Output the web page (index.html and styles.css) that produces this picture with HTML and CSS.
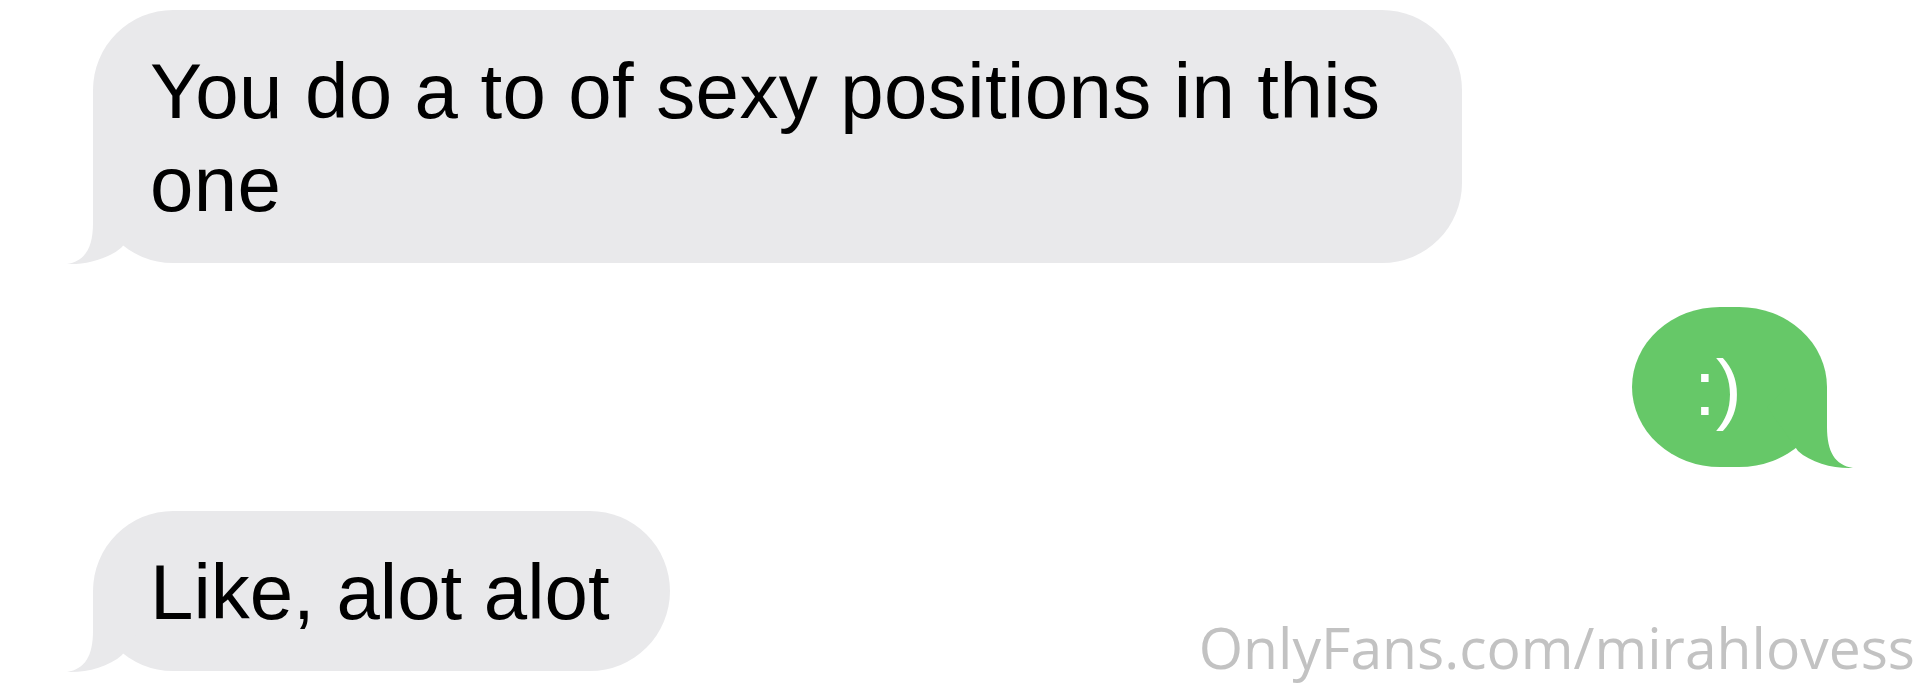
FILE: index.html
```html
<!DOCTYPE html>
<html lang="en">
<head>
    <meta charset="UTF-8">
    <title>Messages</title>
    <link rel="stylesheet" href="styles.css">
</head>
<body>
    <div class="thread">
        <div class="msg recv wide">
            You do a to of sexy positions in this one
            <svg class="tail" viewBox="-30 -80 110 82" width="110" height="82">
                <path d="M 0 -80 L 0 -40 C 0 -15 -8 -2 -26 1 C -8 2 16 -4 29 -16 L 60 -60 L 40 -80 Z" />
            </svg>
        </div>

        <div class="msg sent">
            :)
            <svg class="tail" viewBox="-30 -80 110 82" width="110" height="82">
                <path d="M 0 -80 L 0 -40 C 0 -15 -8 -2 -26 1 C -8 2 16 -4 29 -16 L 60 -60 L 40 -80 Z" />
            </svg>
        </div>

        <div class="msg recv short">
            Like, alot alot
            <svg class="tail" viewBox="-30 -80 110 82" width="110" height="82">
                <path d="M 0 -80 L 0 -40 C 0 -15 -8 -2 -26 1 C -8 2 16 -4 29 -16 L 60 -60 L 40 -80 Z" />
            </svg>
        </div>

        <!-- watermark sits on top of the screenshot -->
        <div class="watermark">OnlyFans.com/mirahlovess</div>
    </div>
</body>
</html>
```

FILE: styles.css
```css
html, body {
    margin: 0;
    padding: 0;
    background: #fff;
}
body {
    width: 1920px;
    height: 696px;
    overflow: hidden;
}
.thread {
    position: relative;
    height: 696px;
    box-sizing: border-box;
    padding: 10px 93px 0 93px;
    display: flex;
    flex-direction: column;
    align-items: flex-start;
    gap: 44px;
}
.msg {
    position: relative;
    box-sizing: border-box;
    font-family: "Liberation Sans", Arial, sans-serif;
    font-size: 78px;
    line-height: 93px;
    padding: 35px 57px 32px 57px;
    border-radius: 80px;
}
.recv {
    background: #e9e9eb;
    color: #000;
}
.recv .tail path {
    fill: #e9e9eb;
}
.wide {
    width: 1369px;
    letter-spacing: 0.4px;
}
.short {
    padding-right: 60px;
}
.sent {
    align-self: flex-end;
    background: #66c868;
    color: #fff;
    width: 195px;
    padding-left: 62px;
    padding-right: 40px;
    border-radius: 88px / 80px;
}
.sent .tail path {
    fill: #66c868;
}
.tail {
    position: absolute;
    bottom: -2px;
    left: -30px;
    display: block;
}
.sent .tail {
    left: auto;
    right: -30px;
    transform: scaleX(-1);
}
.watermark {
    position: absolute;
    right: 5px;
    bottom: 20px;
    font-family: "Open Sans", sans-serif;
    font-size: 57px;
    line-height: 1;
    color: #c2c2c2;
    white-space: nowrap;
}
```
